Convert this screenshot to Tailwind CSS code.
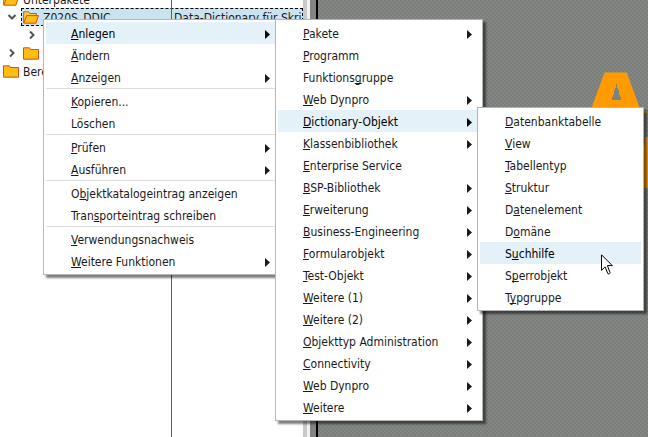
<!DOCTYPE html>
<html lang="de">
<head>
<meta charset="utf-8">
<title>Repository Browser</title>
<script src="https://cdn.jsdelivr.net/npm/@tailwindcss/browser@4"></script>
</head>
<body class="relative flex h-screen overflow-hidden bg-white font-['DejaVu_Sans_Condensed','DejaVu_Sans',sans-serif] text-xs text-[#1a1a1a]">

<svg class="hidden" aria-hidden="true">
  <symbol id="folder" viewBox="0 0 16 13"><path d="M.5 12.2V.8h6l1 1.700h8v9.700z" fill="#fdbd12" stroke="#d2521e"/></symbol>
  <symbol id="folder-open" viewBox="0 0 16 13"><path d="M.7 12V.8h5l1 1.700h6.600v2" fill="#fdd048" stroke="#d2521e"/><path d="M.8 12.200 3.600 4.600h11.900l-2.600 7.600z" fill="#fdbd12" stroke="#d2521e"/></symbol>
  <symbol id="chevron" viewBox="0 0 8 8"><path d="M2 .5 5.500 4 2 7.500" fill="none" stroke="#555" stroke-width="2"/></symbol>
  <symbol id="arrow" viewBox="0 0 5 9"><path d="M0 0 5 4.500 0 9z" fill="currentColor"/></symbol>
</svg>

<!-- Object tree -->
<section class="relative isolate w-[303px] shrink-0 overflow-hidden" aria-label="Objektliste">
  <div class="absolute inset-y-0 left-[171px] z-10 w-px bg-[#5c5c5c]"></div>
  <div class="-mt-[10px] flex h-[18px] items-center gap-1 pl-[3px]">
    <svg class="h-[13px] w-4"><use href="#folder-open"/></svg><span class="pt-0.5">Unterpakete</span>
  </div>
  <div class="flex h-[18px] items-center">
    <svg class="ml-2 h-2 w-2 shrink-0 rotate-90"><use href="#chevron"/></svg>
    <div class="relative ml-[5px] flex h-full flex-1 items-center overflow-hidden border border-dashed border-black bg-[#cbe3ef] whitespace-nowrap">
      <span class="absolute -top-px -left-px h-[18px] w-1.5 border-t border-l border-[#e00]"></span>
      <span class="absolute -top-px -right-px h-1.5 w-1.5 border-t border-r border-[#e00]"></span>
      <svg class="ml-px h-[13px] w-4 shrink-0"><use href="#folder-open"/></svg>
      <span class="ml-1 w-[131px] shrink-0 pt-0.5">Z020S_DDIC</span><span class="pt-0.5">Data-Dictionary für Skrip</span>
    </div>
  </div>
  <div class="flex h-[18px] items-center pl-7"><svg class="h-2 w-2"><use href="#chevron"/></svg></div>
  <div class="flex h-[18px] items-center gap-[7px] pl-2">
    <svg class="h-2 w-2"><use href="#chevron"/></svg><svg class="h-[13px] w-4"><use href="#folder"/></svg>
  </div>
  <div class="flex h-[18px] items-center gap-1 pl-[3px]">
    <svg class="h-[13px] w-4"><use href="#folder"/></svg><span class="pt-0.5">Bere</span>
  </div>
</section>

<!-- Splitter -->
<div class="w-1 shrink-0 bg-[#c9c9c9]"></div>
<div class="w-[3px] shrink-0 bg-[#f2f2f4]"></div>
<div class="w-1.5 shrink-0 bg-[#858286]"></div>
<div class="w-0.5 shrink-0 bg-black"></div>

<!-- Work area -->
<main class="relative flex-1 overflow-hidden bg-[#7e827e] bg-[repeating-conic-gradient(#7a7e7b_0_25%,#848783_0_50%)] bg-size-[4px_4px]">
  <div class="absolute top-[60px] left-[262px] h-16 w-16 overflow-hidden">
    <span class="absolute top-[8px] left-[7px] font-['DejaVu_Sans'] text-[74px] leading-[74px] font-bold text-[#ff9a00] [-webkit-text-stroke:8px_#ff9a00]">A</span>
    <svg class="absolute top-[24px] left-[29px] h-[26px] w-[15px]" viewBox="0 0 15 26" aria-hidden="true"><path d="M0 8h15v18H0z" fill="#ff9a00"/><path d="M7 0h1v4h1v2h1v5h1v2h1v3H3v-3h1v-2h1V6h1V4h1z" fill="#7e827e"/></svg>
  </div>
  <svg class="absolute top-[107px] left-[325px] h-[81px] w-2" fill="#ff9a00"><path d="M0 0h1v4h3v2H0zM0 45h1V38h1V30h3v51H0z"/></svg>
</main>

<!-- Context menu -->
<ul role="menu" aria-label="Kontextmenü" class="absolute top-[19px] left-[43px] w-[238px] border border-[#b5b5b5] bg-white p-0.5 shadow-[3px_3px_2px_rgba(0,0,0,0.5)]">
  <li><button class="flex h-[22px] w-full items-center justify-between bg-[#e5f1f9] pt-0.5 pr-2 pl-[25px] text-black"><span><u class="underline-offset-1">A</u>nlegen</span><svg class="h-[9px] w-[5px]"><use href="#arrow"/></svg></button></li>
  <li><button class="flex h-[22px] w-full items-center pt-0.5 pl-[25px]"><span><u class="underline-offset-1">Ä</u>ndern</span></button></li>
  <li><button class="flex h-[22px] w-full items-center justify-between pt-0.5 pr-2 pl-[25px]"><span><u class="underline-offset-1">A</u>nzeigen</span><svg class="h-[9px] w-[5px]"><use href="#arrow"/></svg></button></li>
  <li role="separator" class="h-0.5 border-t border-[#dcdcdc]"></li>
  <li><button class="flex h-[22px] w-full items-center pt-0.5 pl-[25px]"><span><u class="underline-offset-1">K</u>opieren...</span></button></li>
  <li><button class="flex h-[22px] w-full items-center pt-0.5 pl-[25px]"><span>Löschen</span></button></li>
  <li role="separator" class="h-0.5 border-t border-[#dcdcdc]"></li>
  <li><button class="flex h-[22px] w-full items-center justify-between pt-0.5 pr-2 pl-[25px]"><span><u class="underline-offset-1">P</u>rüfen</span><svg class="h-[9px] w-[5px]"><use href="#arrow"/></svg></button></li>
  <li><button class="flex h-[22px] w-full items-center justify-between pt-0.5 pr-2 pl-[25px]"><span><u class="underline-offset-1">A</u>usführen</span><svg class="h-[9px] w-[5px]"><use href="#arrow"/></svg></button></li>
  <li role="separator" class="h-0.5 border-t border-[#dcdcdc]"></li>
  <li><button class="flex h-[22px] w-full items-center pt-0.5 pl-[25px]"><span>O<u class="underline-offset-1">b</u>jektkatalogeintrag anzeigen</span></button></li>
  <li><button class="flex h-[22px] w-full items-center pt-0.5 pl-[25px]"><span>Tran<u class="underline-offset-1">s</u>porteintrag schreiben</span></button></li>
  <li role="separator" class="h-0.5 border-t border-[#dcdcdc]"></li>
  <li><button class="flex h-[22px] w-full items-center pt-0.5 pl-[25px]"><span><u class="underline-offset-1">V</u>erwendungsnachweis</span></button></li>
  <li><button class="flex h-[22px] w-full items-center justify-between pt-0.5 pr-2 pl-[25px]"><span><u class="underline-offset-1">W</u>eitere Funktionen</span><svg class="h-[9px] w-[5px]"><use href="#arrow"/></svg></button></li>
</ul>

<!-- Submenu: Anlegen -->
<ul role="menu" aria-label="Anlegen" class="absolute top-[19px] left-[275px] w-[208px] border border-[#b5b5b5] bg-white p-0.5 shadow-[3px_3px_2px_rgba(0,0,0,0.5)]">
  <li><button class="flex h-[22px] w-full items-center justify-between pt-0.5 pr-2 pl-[25px]"><span><u class="underline-offset-1">P</u>akete</span><svg class="h-[9px] w-[5px]"><use href="#arrow"/></svg></button></li>
  <li><button class="flex h-[22px] w-full items-center pt-0.5 pl-[25px]"><span><u class="underline-offset-1">P</u>rogramm</span></button></li>
  <li><button class="flex h-[22px] w-full items-center pt-0.5 pl-[25px]"><span>Funktions<u class="underline-offset-1 [text-decoration-skip-ink:none]">g</u>ruppe</span></button></li>
  <li><button class="flex h-[22px] w-full items-center justify-between pt-0.5 pr-2 pl-[25px]"><span><u class="underline-offset-1">W</u>eb Dynpro</span><svg class="h-[9px] w-[5px]"><use href="#arrow"/></svg></button></li>
  <li><button class="flex h-[22px] w-full items-center justify-between bg-[#e5f1f9] pt-0.5 pr-2 pl-[25px] text-black"><span><u class="underline-offset-1">D</u>ictionary-Objekt</span><svg class="h-[9px] w-[5px]"><use href="#arrow"/></svg></button></li>
  <li><button class="flex h-[22px] w-full items-center justify-between pt-0.5 pr-2 pl-[25px]"><span><u class="underline-offset-1">K</u>lassenbibliothek</span><svg class="h-[9px] w-[5px]"><use href="#arrow"/></svg></button></li>
  <li><button class="flex h-[22px] w-full items-center pt-0.5 pl-[25px]"><span><u class="underline-offset-1">E</u>nterprise Service</span></button></li>
  <li><button class="flex h-[22px] w-full items-center justify-between pt-0.5 pr-2 pl-[25px]"><span><u class="underline-offset-1">B</u>SP-Bibliothek</span><svg class="h-[9px] w-[5px]"><use href="#arrow"/></svg></button></li>
  <li><button class="flex h-[22px] w-full items-center justify-between pt-0.5 pr-2 pl-[25px]"><span><u class="underline-offset-1">E</u>rweiterung</span><svg class="h-[9px] w-[5px]"><use href="#arrow"/></svg></button></li>
  <li><button class="flex h-[22px] w-full items-center justify-between pt-0.5 pr-2 pl-[25px]"><span><u class="underline-offset-1">B</u>usiness-Engineering</span><svg class="h-[9px] w-[5px]"><use href="#arrow"/></svg></button></li>
  <li><button class="flex h-[22px] w-full items-center justify-between pt-0.5 pr-2 pl-[25px]"><span><u class="underline-offset-1">F</u>ormularobjekt</span><svg class="h-[9px] w-[5px]"><use href="#arrow"/></svg></button></li>
  <li><button class="flex h-[22px] w-full items-center justify-between pt-0.5 pr-2 pl-[25px]"><span><u class="underline-offset-1">T</u>est-Objekt</span><svg class="h-[9px] w-[5px]"><use href="#arrow"/></svg></button></li>
  <li><button class="flex h-[22px] w-full items-center justify-between pt-0.5 pr-2 pl-[25px]"><span><u class="underline-offset-1">W</u>eitere (1)</span><svg class="h-[9px] w-[5px]"><use href="#arrow"/></svg></button></li>
  <li><button class="flex h-[22px] w-full items-center justify-between pt-0.5 pr-2 pl-[25px]"><span><u class="underline-offset-1">W</u>eitere (2)</span><svg class="h-[9px] w-[5px]"><use href="#arrow"/></svg></button></li>
  <li><button class="flex h-[22px] w-full items-center justify-between pt-0.5 pr-2 pl-[25px]"><span><u class="underline-offset-1">O</u>bjekttyp Administration</span><svg class="h-[9px] w-[5px]"><use href="#arrow"/></svg></button></li>
  <li><button class="flex h-[22px] w-full items-center justify-between pt-0.5 pr-2 pl-[25px]"><span><u class="underline-offset-1">C</u>onnectivity</span><svg class="h-[9px] w-[5px]"><use href="#arrow"/></svg></button></li>
  <li><button class="flex h-[22px] w-full items-center justify-between pt-0.5 pr-2 pl-[25px]"><span><u class="underline-offset-1">W</u>eb Dynpro</span><svg class="h-[9px] w-[5px]"><use href="#arrow"/></svg></button></li>
  <li><button class="flex h-[22px] w-full items-center justify-between pt-0.5 pr-2 pl-[25px]"><span><u class="underline-offset-1">W</u>eitere</span><svg class="h-[9px] w-[5px]"><use href="#arrow"/></svg></button></li>
</ul>

<!-- Submenu: Dictionary-Objekt -->
<ul role="menu" aria-label="Dictionary-Objekt" class="absolute top-[107px] left-[477px] w-[167px] border border-[#b5b5b5] bg-white p-0.5 shadow-[3px_3px_2px_rgba(0,0,0,0.5)]">
  <li><button class="flex h-[22px] w-full items-center pt-0.5 pl-[25px]"><span><u class="underline-offset-1">D</u>atenbanktabelle</span></button></li>
  <li><button class="flex h-[22px] w-full items-center pt-0.5 pl-[25px]"><span><u class="underline-offset-1">V</u>iew</span></button></li>
  <li><button class="flex h-[22px] w-full items-center pt-0.5 pl-[25px]"><span><u class="underline-offset-1">T</u>abellentyp</span></button></li>
  <li><button class="flex h-[22px] w-full items-center pt-0.5 pl-[25px]"><span><u class="underline-offset-1">S</u>truktur</span></button></li>
  <li><button class="flex h-[22px] w-full items-center pt-0.5 pl-[25px]"><span>D<u class="underline-offset-1">a</u>tenelement</span></button></li>
  <li><button class="flex h-[22px] w-full items-center pt-0.5 pl-[25px]"><span>D<u class="underline-offset-1">o</u>mäne</span></button></li>
  <li><button class="flex h-[22px] w-full items-center bg-[#e5f1f9] pt-0.5 pl-[25px] text-black"><span>S<u class="underline-offset-1">u</u>chhilfe</span></button></li>
  <li><button class="flex h-[22px] w-full items-center pt-0.5 pl-[25px]"><span>S<u class="underline-offset-1 [text-decoration-skip-ink:none]">p</u>errobjekt</span></button></li>
  <li><button class="flex h-[22px] w-full items-center pt-0.5 pl-[25px]"><span>T<u class="underline-offset-1 [text-decoration-skip-ink:none]">y</u>pgruppe</span></button></li>
</ul>

<!-- Pointer -->
<svg class="absolute top-[254px] left-[601px] h-[21px] w-3" viewBox="0 0 12 21" aria-hidden="true"><path d="M.5.8v15.600l3.600-3.500 2.800 6.800c.9.600 2.200 0 2.200-1L6.400 11.600h4.900z" fill="#fff" stroke="#000"/></svg>
</body>
</html>
